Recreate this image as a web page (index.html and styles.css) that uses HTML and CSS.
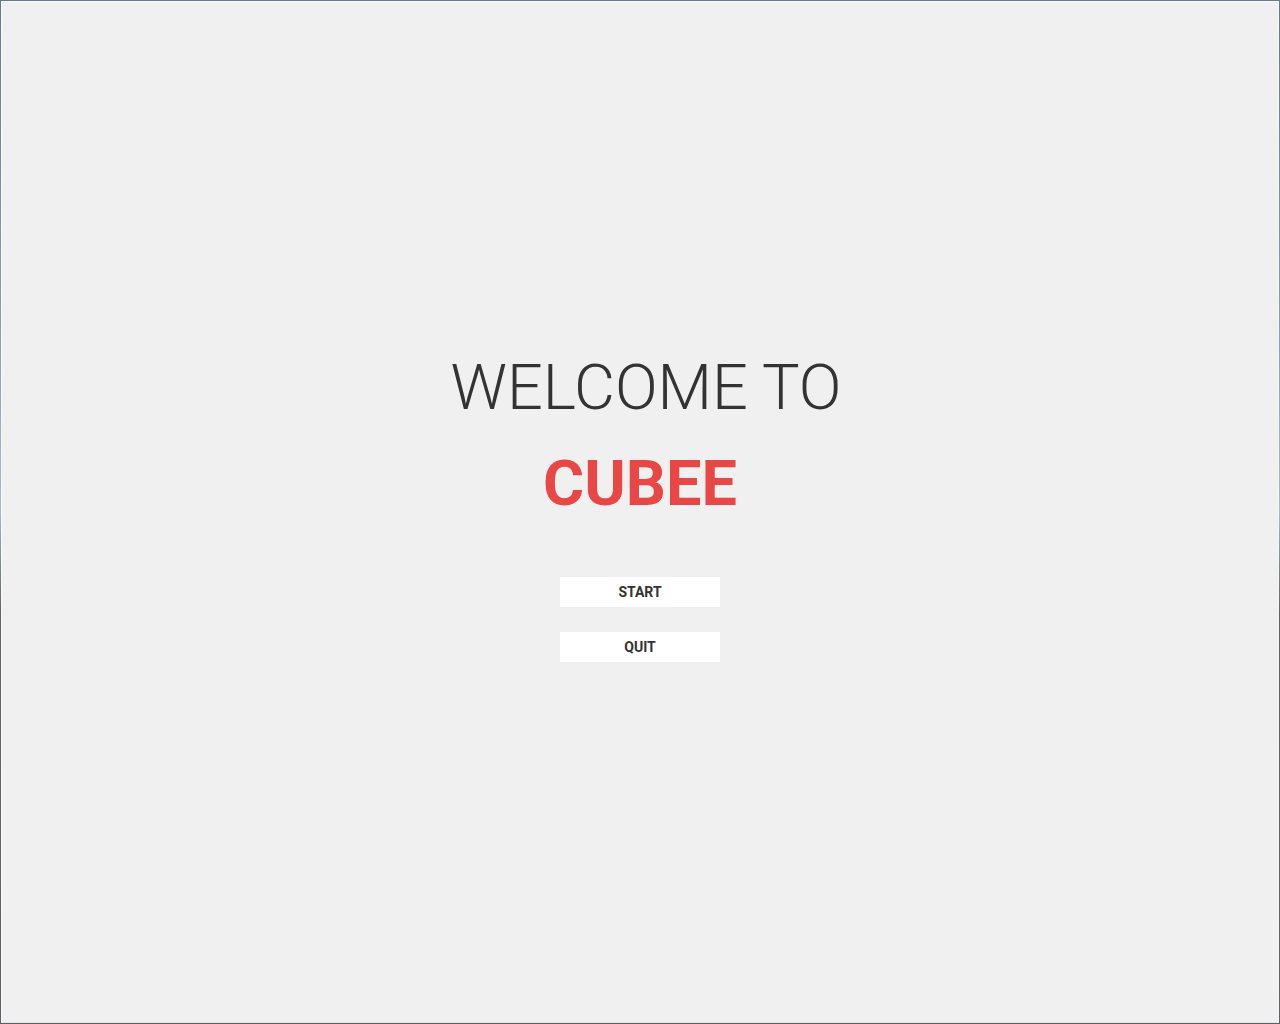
FILE: index.html
```html
<!DOCTYPE html>
<html lang="en">
<head>
<meta charset="utf-8">
<title>Cubee</title>
<link rel="stylesheet" href="styles.css">
</head>
<body>
<div class="frame">
  <div class="inner">
    <main class="menu">
      <h1 class="welcome">WELCOME TO</h1>
      <h2 class="brand">CUBEE</h2>
      <div class="buttons">
        <button class="btn">START</button>
        <button class="btn">QUIT</button>
      </div>
    </main>
  </div>
</div>
</body>
</html>
```
FILE: styles.css
```css
html, body {
  margin: 0;
  padding: 0;
  height: 100%;
}
body {
  font-family: Roboto, "Liberation Sans", sans-serif;
  background: #f0f0f0;
}
.frame {
  box-sizing: border-box;
  height: 1024px;
  width: 1280px;
  border: 1px solid transparent;
  border-image: linear-gradient(to bottom, #6a7591 0%, #8c98b4 30%, #a9b6cc 50%, #7e8a8a 55%, #5f6266 60%, #5c5f66 100%) 1;
}
.inner {
  box-sizing: border-box;
  height: 100%;
  border: 1px solid #fbfbfb;
  border-right-color: #f7f7f7;
  border-bottom-color: #e4e4e4;
  background: #f0f0f0;
  display: flex;
  justify-content: center;
}
.menu {
  display: flex;
  flex-direction: column;
  align-items: center;
  padding-top: 344px;
}
.welcome {
  margin: 0 0 0 12px;
  font-weight: 300;
  font-size: 63px;
  line-height: 84px;
  color: #333333;
}
.brand {
  margin: 12px 0 0;
  font-weight: 700;
  font-size: 63px;
  line-height: 84px;
  color: #e94646;
}
.buttons {
  display: flex;
  flex-direction: column;
  gap: 25px;
  margin-top: 51px;
}
.btn {
  width: 160px;
  height: 30px;
  border: none;
  background: #ffffff;
  font-family: Roboto, "Liberation Sans", sans-serif;
  font-weight: 700;
  font-size: 14px;
  color: #333333;
  padding: 0;
  margin: 0;
}
```
